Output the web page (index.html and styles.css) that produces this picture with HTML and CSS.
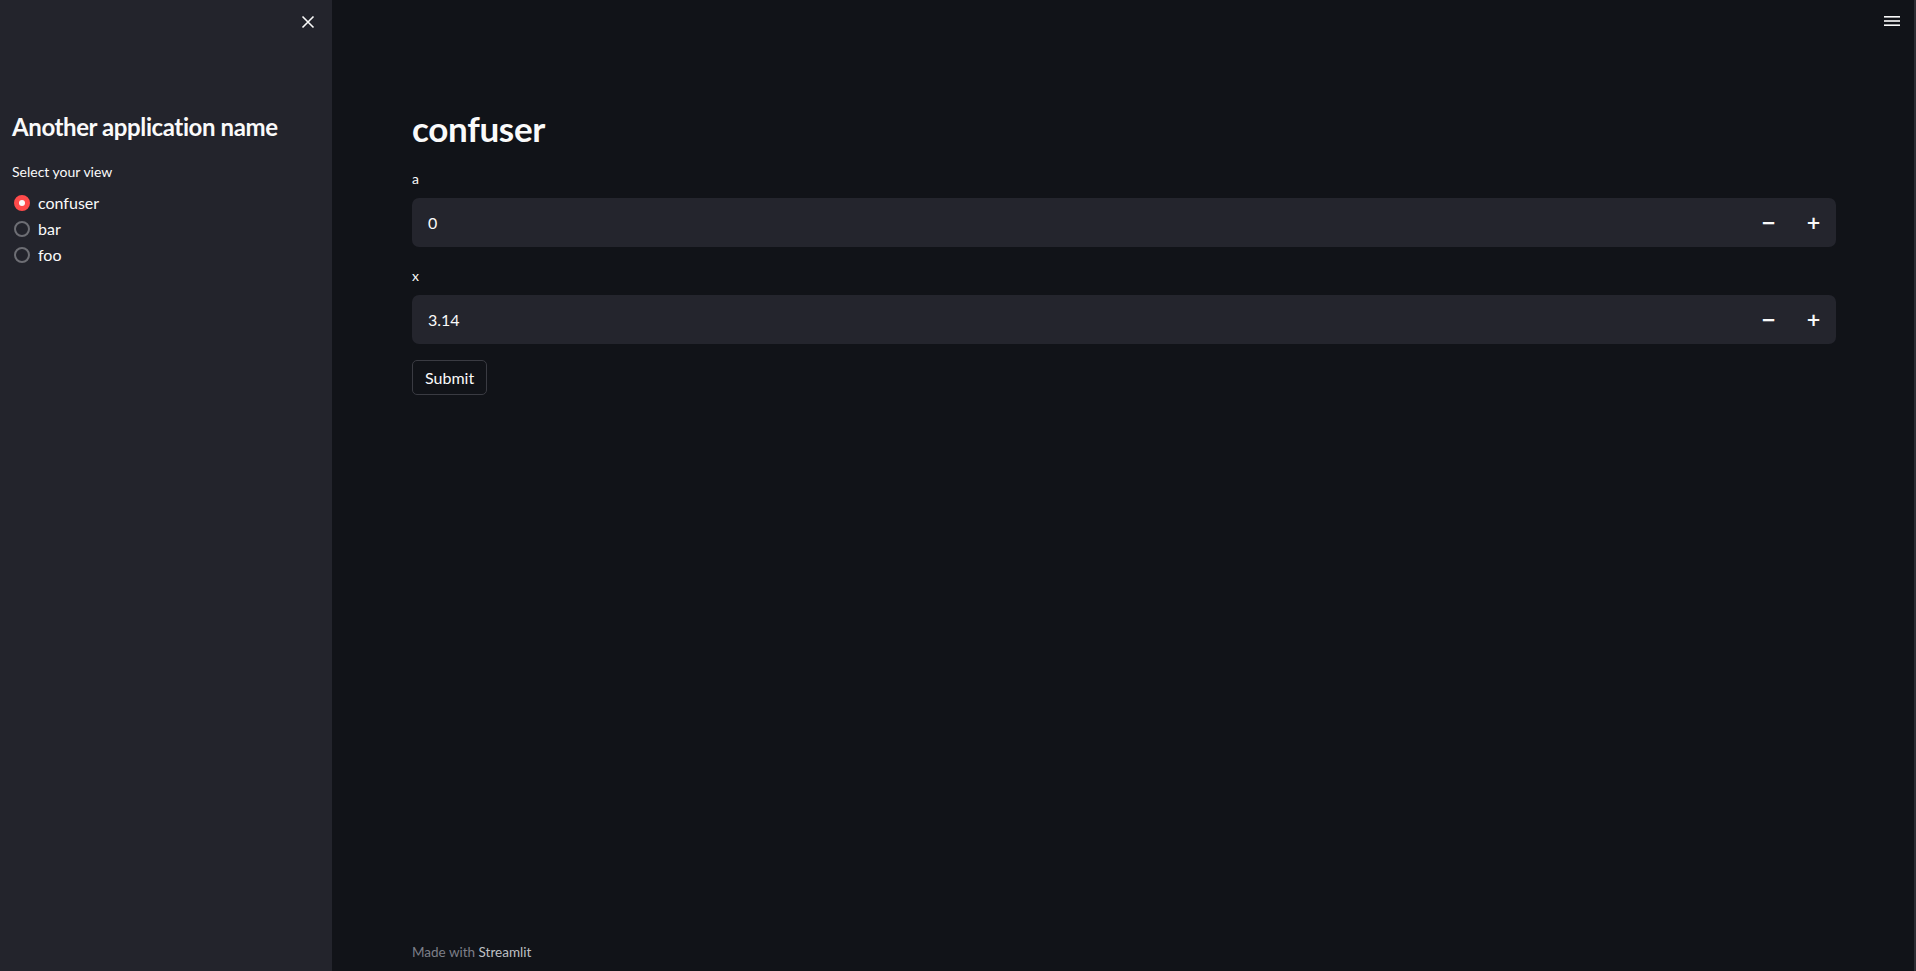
FILE: index.html
```html
<!DOCTYPE html>
<html>
<head>
<meta charset="utf-8">
<link rel="stylesheet" href="styles.css">
</head>
<body>
<div class="app">
  <aside class="sidebar">
    <div class="sidebar-top">
      <button class="close-btn" aria-label="Close">
        <svg width="14" height="14" viewBox="0 0 14 14"><path d="M1.5 1.5L12.5 12.5M12.5 1.5L1.5 12.5" stroke="#fafafa" stroke-width="1.6" fill="none"/></svg>
      </button>
    </div>
    <h2 class="side-title">Another application name</h2>
    <div class="radio-label">Select your view</div>
    <div class="radio-group">
      <label class="radio-item"><span class="radio-dot checked"></span><span class="radio-text">confuser</span></label>
      <label class="radio-item"><span class="radio-dot"></span><span class="radio-text">bar</span></label>
      <label class="radio-item"><span class="radio-dot"></span><span class="radio-text">foo</span></label>
    </div>
  </aside>
  <main class="main">
    <div class="menu">
      <svg width="16" height="12" viewBox="0 0 16 12"><rect x="0" y="1" width="16" height="1.6" fill="#fafafa"/><rect x="0" y="5.2" width="16" height="1.6" fill="#fafafa"/><rect x="0" y="9.4" width="16" height="1.6" fill="#fafafa"/></svg>
    </div>
    <div class="content">
      <h1 class="title">confuser</h1>
      <div class="field">
        <div class="field-label">a</div>
        <div class="num-input">
          <div class="num-value">0</div>
          <button class="step">&#8722;</button>
          <button class="step">+</button>
        </div>
      </div>
      <div class="field">
        <div class="field-label">x</div>
        <div class="num-input">
          <div class="num-value">3.14</div>
          <button class="step">&#8722;</button>
          <button class="step">+</button>
        </div>
      </div>
      <button class="submit">Submit</button>
    </div>
    <footer class="footer">Made with <span class="brand">Streamlit</span></footer>
  </main>
</div>
</body>
</html>
```

FILE: styles.css
```css
* { box-sizing: border-box; }
html, body {
  margin: 0;
  height: 100%;
  background: #111318;
  color: #fafafa;
  font-family: "Lato", "Noto Sans", sans-serif;
}
.app {
  display: flex;
  height: 971px;
  overflow: hidden;
  border-right: 2px solid #2c2d33;
}
.sidebar {
  width: 332px;
  flex: none;
  background: #23242c;
  padding: 0 12px;
}
.sidebar-top {
  display: flex;
  justify-content: flex-end;
  height: 44px;
  padding: 15px 5px 0 0;
}
.close-btn {
  background: none;
  border: none;
  padding: 0;
  width: 14px;
  height: 14px;
  display: flex;
}
.side-title {
  margin: 69px 0 0 0;
  font-size: 24px;
  font-weight: 700;
  line-height: 1.2;
  letter-spacing: -0.4px;
  white-space: nowrap;
}
.radio-label {
  margin-top: 20px;
  font-size: 14px;
  line-height: 20px;
}
.radio-group {
  display: flex;
  flex-direction: column;
  margin-top: 8px;
}
.radio-item {
  display: flex;
  align-items: center;
  height: 26px;
  padding-left: 2px;
}
.radio-dot {
  width: 16px;
  height: 16px;
  border-radius: 50%;
  border: 2px solid #6d6e74;
  flex: none;
  position: relative;
}
.radio-dot.checked {
  background: #ff4b4b;
  border-color: #ff4b4b;
}
.radio-dot.checked::after {
  content: "";
  position: absolute;
  left: 3px;
  top: 3px;
  width: 6px;
  height: 6px;
  border-radius: 50%;
  background: #fafafa;
}
.radio-text {
  margin-left: 8px;
  font-size: 16px;
}
.main {
  flex: 1;
  position: relative;
  display: flex;
  flex-direction: column;
  padding: 0 78px 0 80px;
}
.menu {
  position: absolute;
  right: 14px;
  top: 11px;
}
.content {
  flex: 1;
  padding-top: 102px;
}
.title {
  margin: 0;
  font-size: 35px;
  font-weight: 700;
  line-height: 52px;
  letter-spacing: -0.3px;
}
.field {
  margin-top: 16px;
}
.field + .field { margin-top: 20px; }
.field-label {
  font-size: 14px;
  line-height: 18px;
}
.num-input {
  margin-top: 10px;
  display: flex;
  height: 49px;
  background: #24252d;
  border-radius: 7px;
}
.num-value {
  flex: 1;
  display: flex;
  align-items: center;
  padding-left: 16px;
  font-size: 16px;
}
.step {
  width: 45px;
  background: none;
  border: none;
  color: #fafafa;
  font-size: 18px;
  font-weight: 700;
  font-family: "DejaVu Sans", sans-serif;
  padding: 0;
}
.submit {
  margin-top: 16px;
  height: 35px;
  padding: 0 12px;
  background: #111318;
  color: #fafafa;
  border: 1px solid #3a3b42;
  border-radius: 5px;
  font-family: "Lato", "Noto Sans", sans-serif;
  font-size: 16px;
}
.footer {
  height: 37px;
  padding-top: 10px;
  font-size: 13.5px;
  color: #7d7f88;
}
.brand { color: #bfc0c5; }
```
